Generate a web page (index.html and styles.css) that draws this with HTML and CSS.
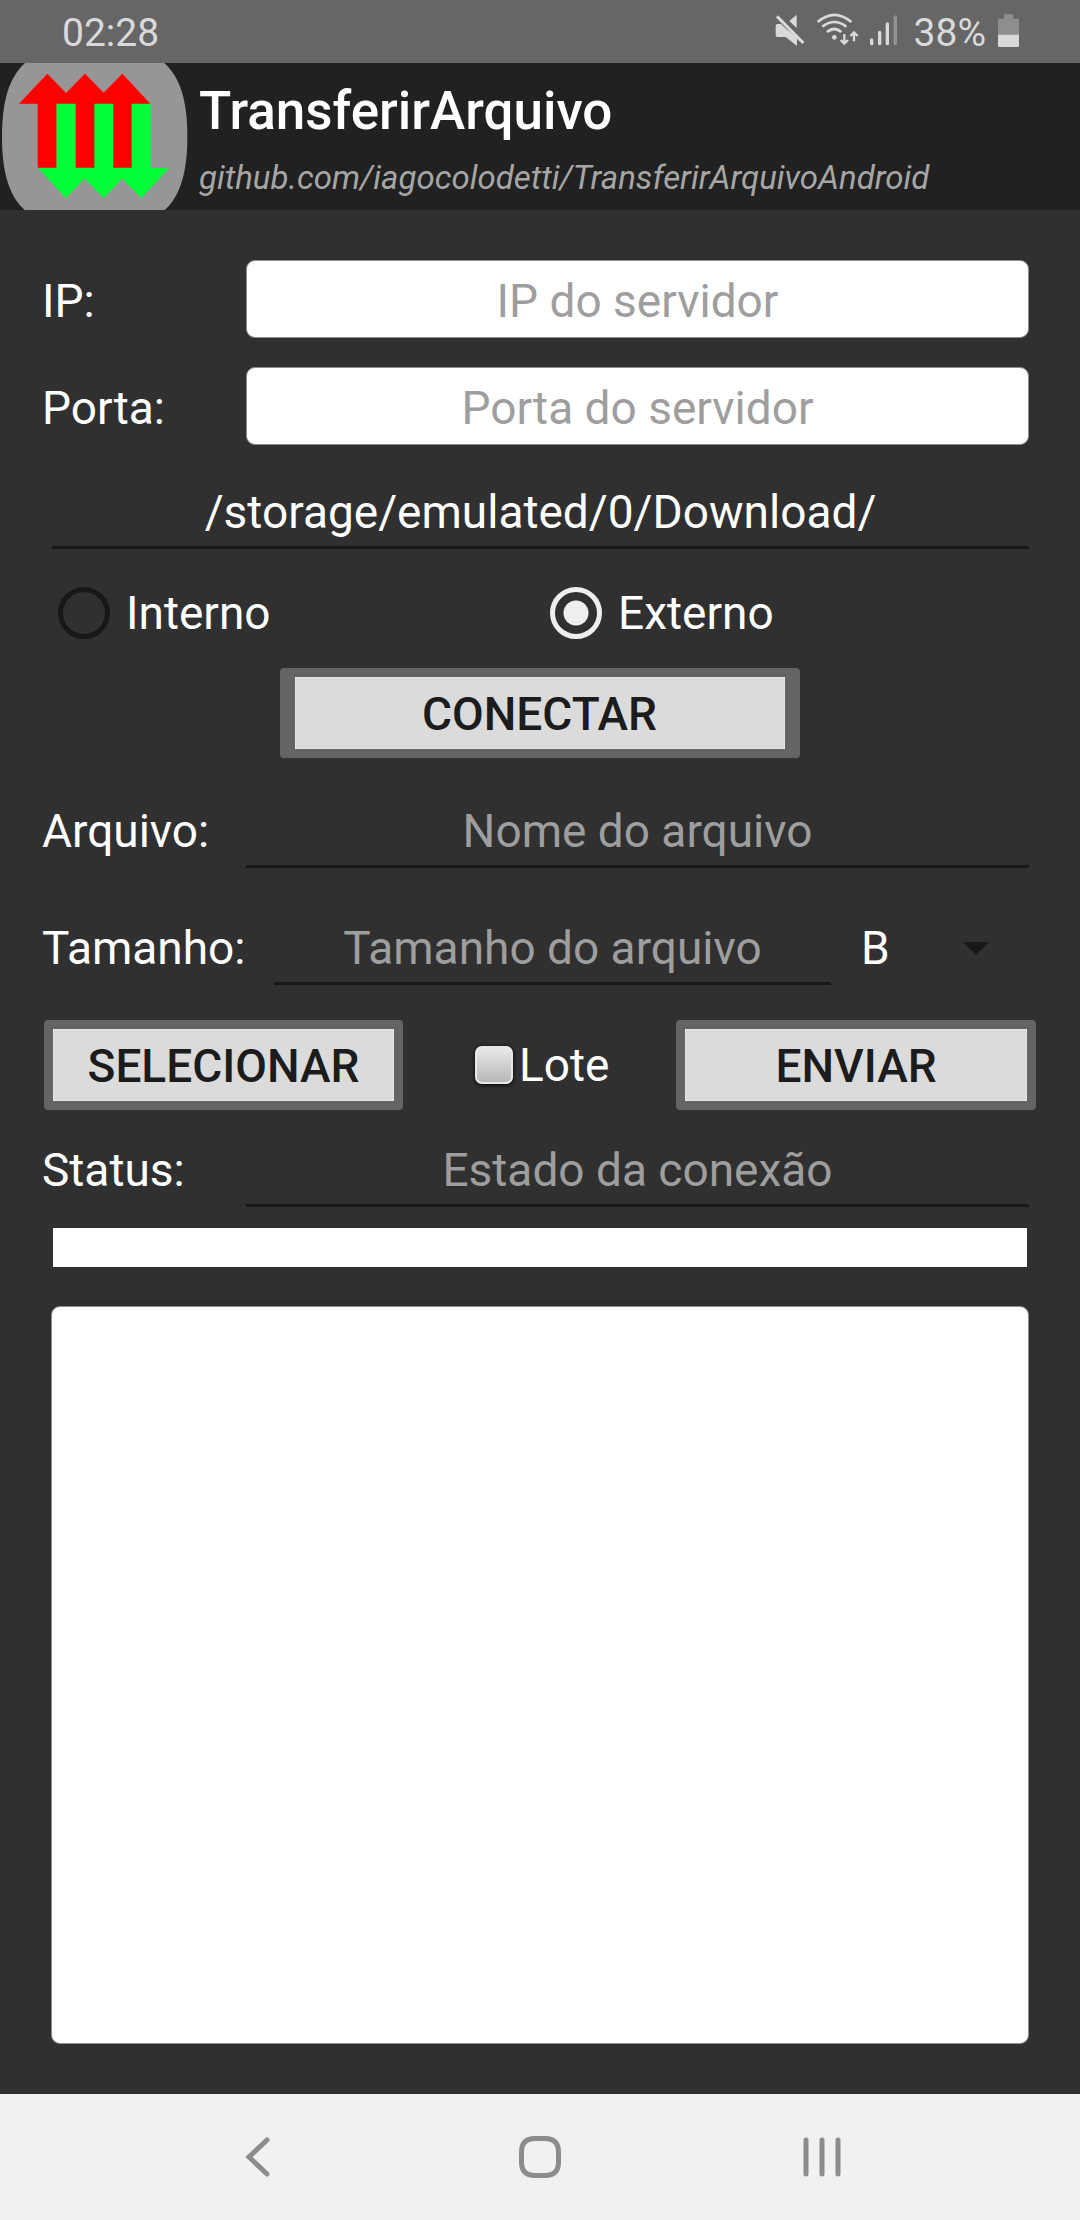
FILE: index.html
```html
<!DOCTYPE html>
<html lang="pt-BR">
<head>
<meta charset="utf-8">
<meta name="viewport" content="width=device-width, initial-scale=1">
<title>TransferirArquivo</title>
<link rel="stylesheet" href="styles.css">
</head>
<body>
<div class="status-bar">
  <span class="clock">02:28</span>
  <svg class="icon-mute" width="30" height="39" viewBox="105 39 90 117" aria-hidden="true">
    <path fill="#d9d9d9" d="M170 44V84L148 63ZM107 77Q107 72 112 72H123L140 88L171 112V138L137 111H112Q107 111 107 106Z"/>
    <path stroke="#666" stroke-width="6" d="M118 46L197 125"/>
    <path stroke="#d9d9d9" stroke-width="9" d="M111 49L190 129"/>
  </svg>
  <svg class="icon-wifi" width="43" height="39" viewBox="228 39 129 117" aria-hidden="true">
    <g fill="none" stroke="#d9d9d9" stroke-width="8">
      <path d="M233 66Q283 23 334 66"/>
      <path d="M247 80Q283 52 319 80"/>
      <path d="M261 96Q283 78 304 96"/>
      <path stroke-width="7" d="M313 102V130M302 120L313 131L324 120M342 124V98M331 108L342 97L353 108"/>
    </g>
    <circle cx="283" cy="112" r="7" fill="#d9d9d9"/>
  </svg>
  <svg class="icon-signal" width="29" height="39" viewBox="387 39 87 117" aria-hidden="true">
    <g stroke="#d9d9d9" stroke-width="10" stroke-linecap="round">
      <path d="M395 120V131M419 97V131M442 72V131"/>
      <path stroke="#929292" d="M466 51V131"/>
    </g>
  </svg>
  <span class="battery-level">38%</span>
  <svg class="icon-battery" width="23" height="39" viewBox="771 39 69 117" aria-hidden="true">
    <path fill="#8e8e8e" d="M792 46Q792 43 795 43H817Q820 43 820 46V56H834Q837 56 837 60V105H774V60Q774 56 778 56H792Z"/>
    <path fill="#d9d9d9" d="M774 104H837V137Q837 141 833 141H778Q774 141 774 137Z"/>
  </svg>
</div>

<header class="app-bar">
  <svg class="logo" width="188" height="147" viewBox="0 189 564 441" aria-hidden="true">
    <path fill="#969696" d="M284 132C487 132 562 207 562 410S487 688 284 688S6 613 6 410S81 132 284 132Z"/>
    <path fill="#00ff37" d="M169 308H452V504H508L424 595L367 536L311 595L254 536L198 595L113 503H169Z"/>
    <path fill="#f00" d="M57 311L142 221L198 279L255 221L311 278L367 221L451 311H395V503H340V311H283V503H227V311H169V503H113V311Z"/>
  </svg>
  <div class="titles">
    <h1 class="title">TransferirArquivo</h1>
    <p class="subtitle">github.com/iagocolodetti/TransferirArquivoAndroid</p>
  </div>
</header>

<main class="content">
  <div class="row">
    <label class="label" for="ip">IP:</label>
    <input class="box-field" id="ip" type="text" placeholder="IP do servidor">
  </div>
  <div class="row row-port">
    <label class="label" for="port">Porta:</label>
    <input class="box-field" id="port" type="text" placeholder="Porta do servidor">
  </div>
  <div class="row row-path">
    <input class="line-field" type="text" value="/storage/emulated/0/Download/" aria-label="Pasta">
  </div>
  <div class="storage">
    <label class="choice"><input class="radio" type="radio" name="storage"><span>Interno</span></label>
    <label class="choice"><input class="radio" type="radio" name="storage" checked><span>Externo</span></label>
  </div>
  <button class="button connect" type="button">CONECTAR</button>
  <div class="row row-file">
    <label class="label" for="file">Arquivo:</label>
    <input class="line-field" id="file" type="text" placeholder="Nome do arquivo">
  </div>
  <div class="row row-size">
    <label class="label label-size" for="size">Tamanho:</label>
    <input class="line-field" id="size" type="text" placeholder="Tamanho do arquivo">
    <div class="unit">
      <select class="unit-select" aria-label="Unidade">
        <option>B</option>
        <option>KB</option>
        <option>MB</option>
        <option>GB</option>
      </select>
      <svg class="unit-arrow" width="26" height="13" viewBox="0 0 26 13" aria-hidden="true"><path fill="#181818" d="M0 0H26L13 13Z"/></svg>
    </div>
  </div>
  <div class="actions">
    <button class="button" type="button">SELECIONAR</button>
    <label class="batch"><input class="check" type="checkbox"><span>Lote</span></label>
    <button class="button" type="button">ENVIAR</button>
  </div>
  <div class="row row-status">
    <label class="label" for="status">Status:</label>
    <input class="line-field" id="status" type="text" placeholder="Estado da conexão" readonly>
  </div>
  <div class="progress" role="progressbar" aria-label="Progresso" aria-valuenow="0"></div>
  <textarea class="log" aria-label="Registro" readonly></textarea>
</main>

<nav class="nav-bar">
  <button class="nav-button" type="button" aria-label="Voltar">
    <svg width="42" height="42" viewBox="0 0 42 42"><path d="M30 4L12 21L30 38" fill="none" stroke="#8c8c8c" stroke-width="5" stroke-linecap="round"/></svg>
  </button>
  <button class="nav-button" type="button" aria-label="Início">
    <svg width="42" height="42" viewBox="0 0 42 42"><path d="M16 2.500H26Q39.500 2.500 39.500 16V26Q39.500 39.500 26 39.500H16Q2.500 39.500 2.500 26V16Q2.500 2.500 16 2.500Z" fill="none" stroke="#8c8c8c" stroke-width="5"/></svg>
  </button>
  <button class="nav-button" type="button" aria-label="Recentes">
    <svg width="42" height="42" viewBox="0 0 42 42"><path d="M5 4V38M21 4V38M37 4V38" stroke="#8c8c8c" stroke-width="5" stroke-linecap="round"/></svg>
  </button>
</nav>
</body>
</html>
```
FILE: styles.css
```css
* {
  box-sizing: border-box;
}

body {
  margin: 0;
  min-height: 100vh;
  display: flex;
  flex-direction: column;
  background: #303030;
  color: #fff;
  font-family: Roboto, "Liberation Sans", sans-serif;
  font-size: 46px;
  line-height: 56px;
}

input,
select,
button,
textarea {
  margin: 0;
  font: inherit;
  color: inherit;
}

/* System status bar */
.status-bar {
  display: flex;
  align-items: center;
  height: 63px;
  padding: 2px 60px 0 62px;
  background: #666;
  color: #d9d9d9;
  font-size: 39px;
}

.clock {
  margin-right: auto;
}

.icon-wifi {
  margin-left: 11px;
}

.icon-signal {
  margin: 0 16px 0 10px;
}

.icon-battery {
  margin-left: 11px;
}

/* App bar */
.app-bar {
  display: flex;
  align-items: center;
  height: 147px;
  background: #212121;
}

.titles {
  padding: 6px 0 0 11px;
}

.title,
.subtitle {
  margin: 0;
}

.title {
  margin-bottom: 14px;
  font-size: 53px;
  font-weight: 500;
  line-height: 62px;
}

.subtitle {
  color: #a6a6a6;
  font-size: 33px;
  font-style: italic;
  line-height: 44px;
}

/* Form */
.content {
  flex: 1;
  display: flex;
  flex-direction: column;
  padding: 50px 51px 50px 42px;
}

.row {
  display: flex;
  align-items: baseline;
}

.label {
  flex: 0 0 204px;
}

.label-size {
  flex-basis: 232px;
}

.box-field,
.line-field {
  flex: 1;
  min-width: 0;
  text-align: center;
  outline: none;
}

.box-field {
  height: 78px;
  padding: 4px 12px 0;
  border: 1px solid #8c8c8c;
  border-radius: 9px;
  background: #fff;
  color: #212121;
}

.line-field {
  height: 71px;
  padding: 0 12px;
  border: 0;
  border-bottom: 3px solid #181818;
  background: none;
}

.box-field::placeholder,
.line-field::placeholder {
  color: #9e9e9e;
  opacity: 1;
}

.row-port {
  margin-top: 29px;
}

.row-path {
  margin: 33px 0 0 10px;
}

.storage {
  display: grid;
  grid-template-columns: 1fr 1fr;
  margin: 36px -13px 27px 16px;
}

.choice {
  display: flex;
  align-items: center;
  gap: 16px;
}

.radio {
  appearance: none;
  width: 52px;
  height: 52px;
  border: 5px solid #181818;
  border-radius: 50%;
}

.radio:checked {
  border-color: #eee;
  background: radial-gradient(circle, #eee 12px, transparent 13px);
}

.button {
  height: 90px;
  padding: 2px 0 0;
  border: 9px solid #646464;
  border-radius: 4px;
  background: #dbdbdb padding-box;
  box-shadow: inset 0 0 2px #fff;
  color: #1c1c1c;
  font-weight: 500;
}

.connect {
  align-self: center;
  width: 520px;
  max-width: 100%;
  margin-left: 8px;
  border-width: 9px 15px;
}

.row-file {
  margin-top: 39px;
}

.row-size {
  margin-top: 46px;
}

.unit {
  flex: 0 0 198px;
  display: grid;
  align-items: center;
}

.unit-select,
.unit-arrow {
  grid-area: 1 / 1;
}

.unit-select {
  appearance: none;
  height: 56px;
  padding: 0 0 0 30px;
  border: 0;
  background: none;
}

.unit-arrow {
  justify-self: end;
  margin-right: 40px;
}

.actions {
  display: grid;
  grid-template-columns: 359fr 273fr 360fr;
  margin: 35px -7px 0 2px;
}

.batch {
  display: flex;
  align-items: center;
  padding-left: 72px;
  gap: 6px;
}

.check {
  appearance: none;
  width: 38px;
  height: 38px;
  border: 2px solid #e8e8e8;
  border-radius: 7px;
  background: linear-gradient(#e8e8e8, #b8b8b8);
  box-shadow: 0 1px 4px #000;
}

.row-status {
  margin-top: 26px;
}

.progress {
  height: 39px;
  margin: 21px 2px 39px 11px;
  background: #fff;
}

.log {
  flex: 1;
  min-height: 200px;
  margin-left: 9px;
  padding: 12px;
  border: 1px solid #8c8c8c;
  border-radius: 9px;
  background: #fff;
  color: #212121;
  resize: none;
  outline: none;
}

/* System navigation bar */
.nav-bar {
  display: grid;
  grid-template-columns: repeat(3, 282px);
  justify-content: center;
  height: 126px;
  background: #f1f1f1;
}

.nav-button {
  display: grid;
  place-items: center;
  padding: 0;
  border: 0;
  background: none;
}
```
